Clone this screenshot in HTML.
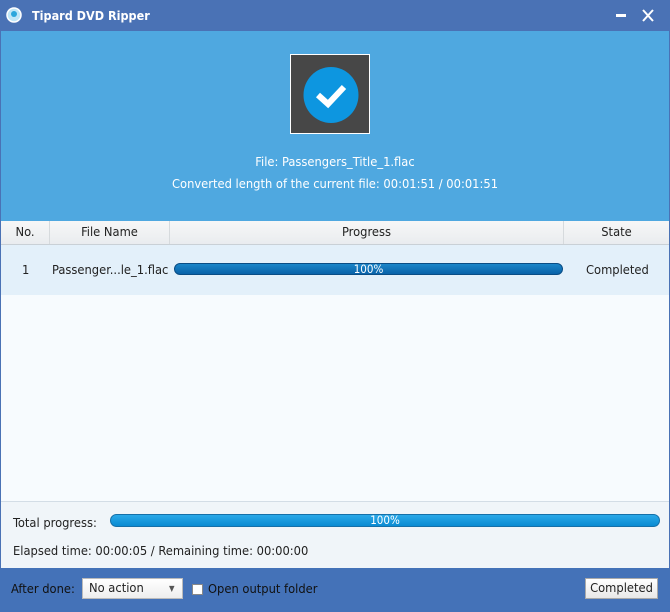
<!DOCTYPE html>
<html><head><meta charset="utf-8"><style>
*{margin:0;padding:0;box-sizing:border-box}
body{width:670px;height:612px;overflow:hidden;font-family:"DejaVu Sans Condensed","Liberation Sans",sans-serif;font-size:12.8px;color:#222;background:#4a72b5;position:relative}
.abs{position:absolute}
#title{left:0;top:0;width:670px;height:31px;background:#4a72b5;color:#fff;font-weight:bold;font-size:12.5px}
#hero{left:1px;top:31px;width:668px;height:190px;background:#4fa8e0}
#main{left:1px;top:221px;width:668px;height:347px;background:#f7fbfe}
.hdr{top:0;height:24px;background:linear-gradient(#f7f7f7,#e9ecef);border-bottom:1px solid #c9d0d6;width:668px;left:0}
.hc{position:absolute;top:0;height:23px;line-height:23px;text-align:center;border-right:1px solid #d6dadd}
</style></head><body>
<div id="title" class="abs">
 <svg class="abs" style="left:6px;top:7px" width="16" height="16"><circle cx="8" cy="8" r="7" fill="#bfe6f7" stroke="#fff" stroke-width="1.5"/><circle cx="8" cy="7" r="3" fill="#2aa6dc"/></svg>
 <div class="abs" style="left:32px;top:8px">Tipard DVD Ripper</div>
 <div class="abs" style="left:616px;top:14px;width:10px;height:3px;background:#fff"></div>
 <svg class="abs" style="left:642px;top:9px" width="12" height="13"><path d="M1 1L11 12M11 1L1 12" stroke="#fff" stroke-width="2"/></svg>
</div>
<div id="hero" class="abs">
 <div class="abs" style="left:289px;top:23px;width:80px;height:80px;background:#474747;border:1px solid #fff">
  <svg class="abs" style="left:11px;top:11px" width="58" height="58"><ellipse cx="29" cy="29" rx="27.5" ry="28" fill="#0d96e0"/><path d="M16 29L26 38L42 21" fill="none" stroke="#fff" stroke-width="6"/></svg>
 </div>
 <div class="abs" style="left:0;width:668px;top:124px;text-align:center;color:#fff">File: Passengers_Title_1.flac</div>
 <div class="abs" style="left:0;width:668px;top:146px;text-align:center;color:#fff">Converted length of the current file: 00:01:51 / 00:01:51</div>
</div>
<div id="main" class="abs">
 <div class="abs hdr">
  <div class="hc" style="left:0;width:49px">No.</div>
  <div class="hc" style="left:49px;width:120px">File Name</div>
  <div class="hc" style="left:169px;width:394px">Progress</div>
  <div class="hc" style="left:563px;width:105px;border:none">State</div>
 </div>
 <div class="abs" style="left:0;top:24px;width:668px;height:50px;background:#e3f0fa">
  <div class="abs" style="left:21px;top:18px">1</div>
  <div class="abs" style="left:51px;top:18px">Passenger...le_1.flac</div>
  <div class="abs" style="left:173px;top:18px;width:389px;height:12px;border-radius:6px;background:linear-gradient(#1a85c8,#0a62a8);border:1px solid #0a4d85;color:#fff;text-align:center;line-height:10px;font-size:11.5px">100%</div>
  <div class="abs" style="left:585px;top:18px">Completed</div>
 </div>
 <div class="abs" style="left:0;top:280px;width:668px;height:67px;background:#f0f5f9;border-top:1px solid #d3dde6">
  <div class="abs" style="left:12px;top:14px">Total progress:</div>
  <div class="abs" style="left:109px;top:12px;width:550px;height:13px;border-radius:7px;background:linear-gradient(#2aa8e8,#0a8bd2);border:1px solid #1670a8;color:#fff;text-align:center;line-height:11px;font-size:11.5px">100%</div>
  <div class="abs" style="left:12px;top:42px">Elapsed time: 00:00:05 / Remaining time: 00:00:00</div>
 </div>
</div>
<div class="abs" style="left:0;top:568px;width:670px;height:44px;background:#4472b8">
 <div class="abs" style="left:11px;top:14px;color:#111">After done:</div>
 <div class="abs" style="left:82px;top:10px;width:101px;height:21px;background:linear-gradient(#fff,#eee);border:1px solid #bbb;padding-left:6px;line-height:19px">No action<span class="abs" style="left:86px;top:0;font-size:8px;color:#555">▼</span></div>
 <div class="abs" style="left:192px;top:16px;width:11px;height:11px;background:#fff;border:1px solid #888"></div>
 <div class="abs" style="left:208px;top:14px;color:#111">Open output folder</div>
 <div class="abs" style="left:585px;top:10px;width:73px;height:21px;background:linear-gradient(#fff,#e8e8e8);border:1px solid #aaa;text-align:center;line-height:19px">Completed</div>
</div>
</body></html>
